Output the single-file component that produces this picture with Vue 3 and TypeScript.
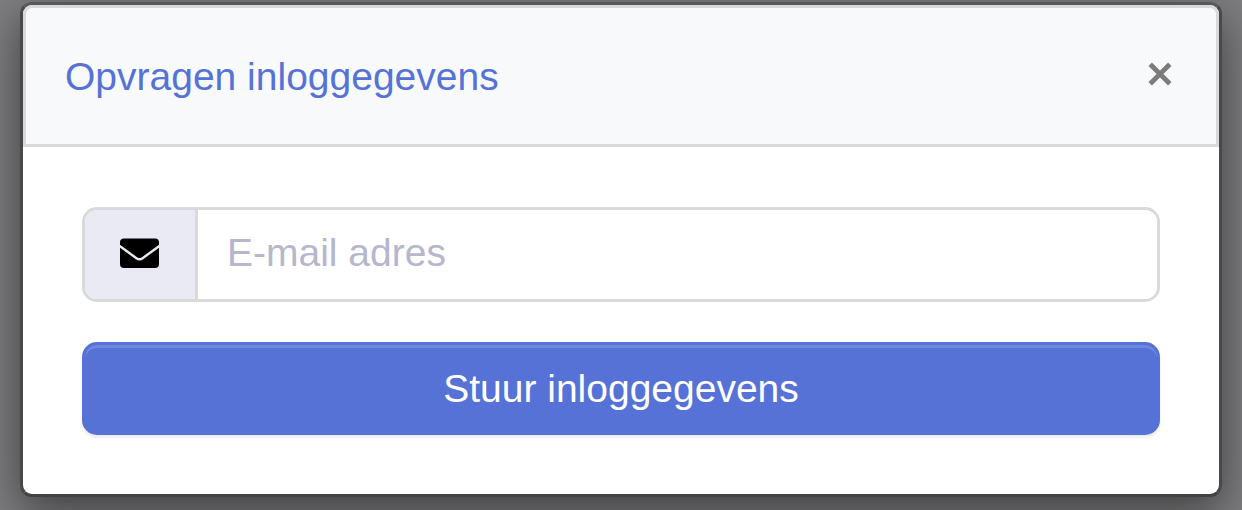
<script setup lang="ts">
import { ref } from 'vue'

const email = ref<string>('')
const open = ref<boolean>(true)

function close(): void {
  open.value = false
}

function submit(): void {
  close()
}
</script>

<template>
  <div class="backdrop">
    <section v-if="open" class="modal" role="dialog" aria-modal="true" aria-labelledby="modal-title">
      <header class="modal-header">
        <h1 id="modal-title" class="title">Opvragen inloggegevens</h1>
        <button class="close" type="button" aria-label="Sluiten" @click="close">
          <svg viewBox="0 0 24 24" aria-hidden="true">
            <path d="M2.2 2.2L21.8 21.8M21.8 2.2L2.2 21.8" fill="none" stroke="currentColor" stroke-width="4.8" />
          </svg>
        </button>
      </header>
      <form class="modal-body" @submit.prevent="submit">
        <div class="field">
          <label class="addon" for="email" aria-label="E-mail adres">
            <svg viewBox="0 0 39 30" aria-hidden="true">
              <rect y="0.6" width="39" height="29.4" rx="4" fill="#000" />
              <path d="M-1 7.4L16.4 20.2Q19.5 22.4 22.6 20.2L40 7.4" fill="none" stroke="#eaeaf4" stroke-width="2.4" />
            </svg>
          </label>
          <input id="email" v-model="email" class="input" type="email" placeholder="E-mail adres" />
        </div>
        <button class="submit" type="submit">Stuur inloggegevens</button>
      </form>
    </section>
  </div>
</template>

<style>
body {
  margin: 0;
  background: #7e7e80;
}
</style>

<style scoped>
.backdrop {
  box-sizing: border-box;
  min-height: 100vh;
  padding: 2px 20px 13px;
  overflow: hidden;
  background: #7e7e80;
  font-family: "Liberation Sans", Arial, sans-serif;
  font-size: 39px;
  line-height: 56px;
}

.modal {
  border: 3px solid;
  border-color: #59595a #494949 #404141;
  border-radius: 12px;
  background: #fff;
  box-shadow: 0 15px 45px rgba(0, 0, 0, 0.5);
}

.modal-header {
  display: flex;
  align-items: flex-start;
  justify-content: space-between;
  padding: 41px 40px 39px 39px;
  border: 3px solid #d9d9d9;
  border-radius: 9px 9px 0 0;
  background: #f8f9fb;
}

.title {
  margin: 0;
  color: #5672d7;
  font-size: inherit;
  font-weight: 400;
}

.close {
  display: flex;
  margin: 9px 0 0;
  padding: 4px;
  border: 0;
  background: none;
  color: #7c7c7d;
  cursor: pointer;
}

.close svg {
  width: 24px;
  height: 24px;
}

.modal-body {
  display: flex;
  flex-direction: column;
  gap: 40px;
  padding: 60px 59px 59px;
}

.field {
  display: flex;
  overflow: hidden;
  border: 3px solid #d9d9d9;
  border-radius: 15px;
}

.addon {
  box-sizing: border-box;
  display: flex;
  align-items: center;
  justify-content: center;
  width: 113px;
  padding: 0 2px 3px 0;
  border-right: 3px solid #d9d9d9;
  background: #eaeaf4;
}

.addon svg {
  width: 39px;
  height: 30px;
}

.input {
  flex: 1;
  min-width: 0;
  height: 89px;
  box-sizing: border-box;
  padding: 0 29px 4px;
  border: 0;
  outline: 0;
  background: #fff;
  color: #333;
  font: inherit;
}

.input::placeholder {
  color: #b6b6cc;
  opacity: 1;
}

.submit {
  padding: 16px 30px 15px;
  border: 3px solid #5672d7;
  border-radius: 15px;
  background: #5672d7;
  box-shadow: inset 0 3px 0 rgba(255, 255, 255, 0.15), 0 3px 3px rgba(0, 0, 0, 0.075);
  color: #fff;
  font: inherit;
  cursor: pointer;
}
</style>
